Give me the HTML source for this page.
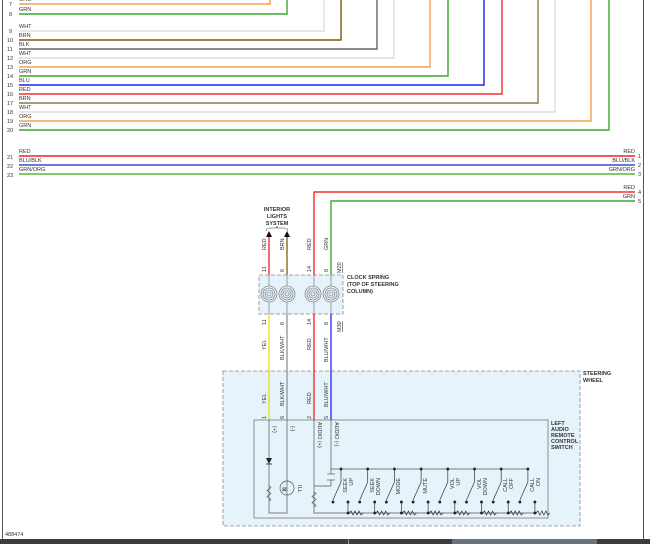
<!DOCTYPE html>
<html><head><meta charset="utf-8"><style>
html,body{margin:0;padding:0;background:#fff;width:650px;height:544px;overflow:hidden}
svg{display:block}
text{font-family:"Liberation Sans",sans-serif;font-size:5.5px;fill:#333}
.n{font-size:5.5px}
.b{font-weight:bold;font-size:5.5px}
</style></head><body>
<svg width="650" height="544" viewBox="0 0 650 544" xmlns="http://www.w3.org/2000/svg">
<rect x="0" y="0" width="650" height="544" fill="#fff"/>
<line x1="2.5" y1="0" x2="2.5" y2="539" stroke="#555" stroke-width="1"/>
<line x1="643.5" y1="0" x2="643.5" y2="539" stroke="#555" stroke-width="1"/>
<g fill="none" stroke-width="1.4">
<polyline points="19,4 270,4 270,0" stroke="#f7a04a"/>
<polyline points="19,14 287,14 287,0" stroke="#3aa82a"/>
<polyline points="19,31 324,31 324,0" stroke="#dedede"/>
<polyline points="19,40 341,40 341,0" stroke="#7a5a10"/>
<polyline points="19,49 377,49 377,0" stroke="#666"/>
<polyline points="19,58 394,58 394,0" stroke="#dedede"/>
<polyline points="19,67 430,67 430,0" stroke="#f7a04a"/>
<polyline points="19,76 448,76 448,0" stroke="#3aa82a"/>
<polyline points="19,85 484,85 484,0" stroke="#2222ee"/>
<polyline points="19,94 502,94 502,0" stroke="#f03030"/>
<polyline points="19,103 538,103 538,0" stroke="#8a7a40"/>
<polyline points="19,112 555,112 555,0" stroke="#dedede"/>
<polyline points="19,121 591,121 591,0" stroke="#f7a04a"/>
<polyline points="19,130 609,130 609,0" stroke="#3aa82a"/>
<line x1="19" y1="156" x2="635" y2="156" stroke="#f02020"/>
<line x1="19" y1="165" x2="635" y2="165" stroke="#4444dd"/>
<line x1="19" y1="174" x2="635" y2="174" stroke="#5ab82a"/>
<polyline points="635,192 314,192 314,275" stroke="#f03030"/>
<polyline points="635,201 331,201 331,275" stroke="#3aa82a"/>
<line x1="269" y1="236" x2="269" y2="275" stroke="#f03030"/>
<line x1="287" y1="236" x2="287" y2="275" stroke="#8a6a20"/>
</g>
<g>
<text x="9" y="6" class="n">7</text><text x="19" y="1">ORG</text>
<text x="9" y="16">8</text><text x="19" y="11">GRN</text>
<text x="9" y="33">9</text><text x="19" y="28">WHT</text>
<text x="7" y="42">10</text><text x="19" y="37">BRN</text>
<text x="7" y="51">11</text><text x="19" y="46">BLK</text>
<text x="7" y="60">12</text><text x="19" y="55">WHT</text>
<text x="7" y="69">13</text><text x="19" y="64">ORG</text>
<text x="7" y="78">14</text><text x="19" y="73">GRN</text>
<text x="7" y="87">15</text><text x="19" y="82">BLU</text>
<text x="7" y="96">16</text><text x="19" y="91">RED</text>
<text x="7" y="105">17</text><text x="19" y="100">BRN</text>
<text x="7" y="114">18</text><text x="19" y="109">WHT</text>
<text x="7" y="123">19</text><text x="19" y="118">ORG</text>
<text x="7" y="132">20</text><text x="19" y="127">GRN</text>
<text x="7" y="159">21</text><text x="19" y="153">RED</text>
<text x="7" y="168">22</text><text x="19" y="162">BLU/BLK</text>
<text x="7" y="177">23</text><text x="19" y="171">GRN/ORG</text>
<text x="635" y="153" text-anchor="end">RED</text><text x="638" y="158">1</text>
<text x="635" y="162" text-anchor="end">BLU/BLK</text><text x="638" y="167">2</text>
<text x="635" y="171" text-anchor="end">GRN/ORG</text><text x="638" y="176">3</text>
<text x="635" y="189" text-anchor="end">RED</text><text x="638" y="194">4</text>
<text x="635" y="198" text-anchor="end">GRN</text><text x="638" y="203">5</text>
</g>
<text x="277" y="211" text-anchor="middle" class="b">INTERIOR</text>
<text x="277" y="218" text-anchor="middle" class="b">LIGHTS</text>
<text x="277" y="225" text-anchor="middle" class="b">SYSTEM</text>
<path d="M266,231 q0,-3 5,-3 l5,0 q1,0 1,-2 q0,2 1,2 l5,0 q5,0 5,3" fill="none" stroke="#333" stroke-width="0.6"/>
<polygon points="269,231 266,237 272,237" fill="#111"/><polygon points="287,231 284,237 290,237" fill="#111"/>
<rect x="223" y="371" width="357" height="155" fill="#e6f3fa" stroke="#888" stroke-width="0.8" stroke-dasharray="4,2"/>
<g transform="rotate(-90)">
<text x="-250" y="266">RED</text><text x="-250" y="284">BRN</text>
<text x="-250" y="311">RED</text><text x="-250" y="328">GRN</text>
<text x="-272" y="266">11</text><text x="-272" y="284">6</text><text x="-272" y="311">14</text><text x="-272" y="328">8</text>
<text x="-273" y="341" style="text-decoration:underline">M20</text>
<text x="-325" y="266">11</text><text x="-325" y="284">6</text><text x="-325" y="311">14</text><text x="-325" y="328">8</text>
<text x="-332" y="341" style="text-decoration:underline">M30</text>
<text x="-350" y="266">YEL</text><text x="-360" y="284">BLK/WHT</text><text x="-350" y="311">RED</text><text x="-362" y="328">BLU/WHT</text>
<text x="-404" y="266">YEL</text><text x="-406" y="284">BLK/WHT</text><text x="-404" y="311">RED</text><text x="-407" y="328">BLU/WHT</text>
<text x="-419" y="266">1</text><text x="-419" y="284">6</text><text x="-419" y="311">2</text><text x="-419" y="328">5</text>
</g>
<rect x="259" y="275" width="84" height="39" fill="#e6f3fa" stroke="#888" stroke-width="0.8" stroke-dasharray="4,2"/>
<g fill="none" stroke="#666" stroke-width="0.6">
<g id="sp"><circle cx="269" cy="294" r="8"/><circle cx="269" cy="294" r="6"/><circle cx="269" cy="294" r="4"/><circle cx="269" cy="294" r="2"/></g>
<use href="#sp" x="18"/><use href="#sp" x="44"/><use href="#sp" x="62"/>
<line x1="269" y1="275" x2="269" y2="286"/><line x1="287" y1="275" x2="287" y2="286"/><line x1="314" y1="275" x2="314" y2="286"/><line x1="331" y1="275" x2="331" y2="286"/>
<line x1="269" y1="302" x2="269" y2="314"/><line x1="287" y1="302" x2="287" y2="314"/><line x1="314" y1="302" x2="314" y2="314"/><line x1="331" y1="302" x2="331" y2="314"/>
</g>
<text x="347" y="279" class="b">CLOCK SPRING</text>
<text x="347" y="286" class="b">(TOP OF STEERING</text>
<text x="347" y="293" class="b">COLUMN)</text>
<text x="583" y="375" class="b">STEERING</text><text x="583" y="382" class="b">WHEEL</text>
<g stroke-width="1.4">
<line x1="269" y1="314" x2="269" y2="420" stroke="#e8e020"/>
<line x1="287" y1="314" x2="287" y2="420" stroke="#999"/>
<line x1="314" y1="314" x2="314" y2="420" stroke="#f03030"/>
<line x1="331" y1="314" x2="331" y2="420" stroke="#3333ee"/>
</g>
<rect x="254" y="420" width="294" height="98" fill="none" stroke="#777" stroke-width="0.8"/>
<text x="551" y="425" class="b">LEFT</text><text x="551" y="431" class="b">AUDIO</text><text x="551" y="437" class="b">REMOTE</text><text x="551" y="443" class="b">CONTROL</text><text x="551" y="449" class="b">SWITCH</text>
<g fill="none" stroke="#555" stroke-width="0.7">
<polyline points="269,420 269,513 287,513 287,420"/>
<polyline points="314,420 314,513 537,513"/>
<polyline points="331,420 331,474"/><polyline points="331,480 331,486 314,486"/>
<line x1="327" y1="474" x2="335" y2="474"/><line x1="327" y1="480" x2="335" y2="480"/>
<line x1="331" y1="469" x2="528" y2="469"/>
<path d="M269,486 l2,1.5 -4,3 4,3 -4,3 4,3 -2,1.5"/>
<path d="M314,492 l2,1.5 -4,3 4,3 -4,3 4,3 -2,1.5"/>
<circle cx="287" cy="488" r="7"/>
</g>
<polygon points="266,458 272,458 269,464" fill="#222"/><line x1="266" y1="464" x2="272" y2="464" stroke="#222" stroke-width="0.8"/>
<text x="282" y="491" font-size="5" fill="#222">⊠</text>
<text transform="translate(273,426) rotate(90)" class="n">(+)</text>
<text transform="translate(291,426) rotate(90)" class="n">(-)</text>
<text transform="translate(298,485) rotate(90)" class="n">ILL</text>
<text transform="translate(318,422) rotate(90)" class="n">AUDIO (+)</text>
<text transform="translate(335,422) rotate(90)" class="n">AUDIO (-)</text>
<g id="sw" stroke="#333" stroke-width="0.7" fill="none">
<line x1="341" y1="469" x2="341" y2="482"/><line x1="341" y1="482" x2="333" y2="500"/>
<line x1="348" y1="502" x2="348" y2="513"/>
<path d="M349,513 l2,-2 2,4 2,-4 2,4 2,-4 2,4 2,-2"/>
<circle cx="341" cy="469" r="1.1" fill="#111"/><circle cx="333" cy="502" r="1.1" fill="#111"/><circle cx="348" cy="502" r="1.1" fill="#111"/><circle cx="348" cy="513" r="1.1" fill="#111"/>
</g>
<use href="#sw" x="26.7"/><use href="#sw" x="53.4"/><use href="#sw" x="80.1"/><use href="#sw" x="106.8"/><use href="#sw" x="133.5"/><use href="#sw" x="160.2"/><use href="#sw" x="186.9"/>
<g class="n">
<text transform="translate(347,478) rotate(-90)" text-anchor="end">SEEK</text><text transform="translate(353,478) rotate(-90)" text-anchor="end">UP</text>
<text transform="translate(374,478) rotate(-90)" text-anchor="end">SEEK</text><text transform="translate(380,478) rotate(-90)" text-anchor="end">DOWN</text>
<text transform="translate(400,478) rotate(-90)" text-anchor="end">MODE</text>
<text transform="translate(427,478) rotate(-90)" text-anchor="end">MUTE</text>
<text transform="translate(454,478) rotate(-90)" text-anchor="end">VOL</text><text transform="translate(460,478) rotate(-90)" text-anchor="end">UP</text>
<text transform="translate(481,478) rotate(-90)" text-anchor="end">VOL</text><text transform="translate(487,478) rotate(-90)" text-anchor="end">DOWN</text>
<text transform="translate(507,478) rotate(-90)" text-anchor="end">CALL</text><text transform="translate(513,478) rotate(-90)" text-anchor="end">OFF</text>
<text transform="translate(534,478) rotate(-90)" text-anchor="end">CALL</text><text transform="translate(540,478) rotate(-90)" text-anchor="end">ON</text>
</g>
<text x="5" y="536" font-size="5">488474</text>
<rect x="0" y="539" width="650" height="5" fill="#3c3c3c"/>
<rect x="348" y="539" width="1" height="5" fill="#999"/>
<rect x="452" y="539" width="145" height="5" fill="#6a737c"/>
</svg>
</body></html>
